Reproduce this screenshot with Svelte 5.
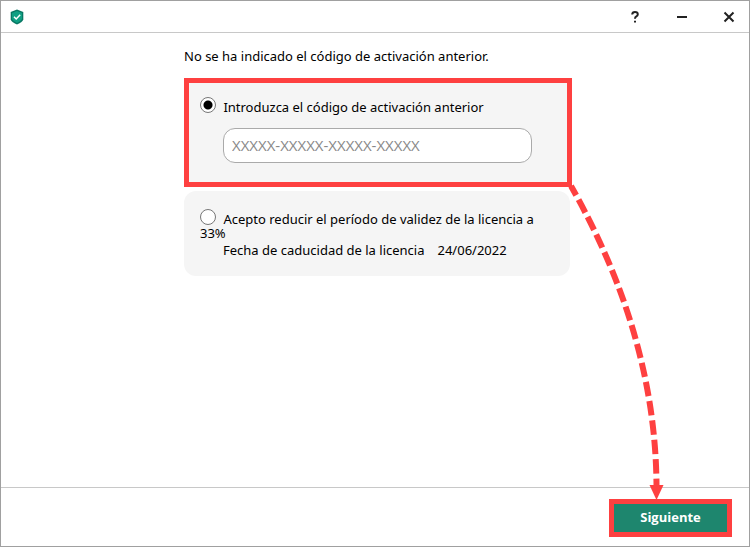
<script lang="ts">
    import { onMount } from 'svelte';

    let page: HTMLElement;
    let source: HTMLElement;
    let target: HTMLElement;

    let choice = $state('code');
    let code = $state('');
    let curve = $state('');
    let head = $state('');

    // Curve from the corner of the marked card down to the marked button
    function connect() {
        const origin = page.getBoundingClientRect();
        const from = source.getBoundingClientRect();
        const to = target.getBoundingClientRect();

        const x1 = from.right - origin.left - 2;
        const y1 = from.bottom - origin.top - 2;
        const x2 = to.left + to.width / 2 - origin.left - 15;
        const y2 = to.top - origin.top;
        const base = y2 - 15;

        curve = `M${x1} ${y1}Q${x2 - 1} ${y1 + (base - y1) / 2} ${x2} ${base}`;
        head = `M${x2 - 7} ${base}h14l-7 15z`;
    }

    onMount(connect);
</script>

<svelte:window onresize={connect} />

<div class="window" bind:this={page}>
    <header>
        <svg class="logo" viewBox="0 0 14 16" aria-hidden="true">
            <path d="M7 .5 13.3 3v7.2Q12.8 13 7 15.6 1.2 13 .7 10.2V3z" fill="#087763" />
            <path d="M7 2 12 4v6Q11 12.4 7 14 3 12.4 2 10V4z" fill="#109f83" />
            <path d="M4 7.8 6.2 10 10.2 5.8" fill="none" stroke="#fff" stroke-width="1.5" />
        </svg>
        <nav>
            <button type="button" aria-label="Ayuda">
                <svg viewBox="0 0 12 12">
                    <path d="M3.2 3.5Q3.3 1 6 1T8.8 3.3Q8.8 4.6 7.4 5.4 6 6.2 6 7.7" />
                    <path d="M6 9.8v1.8" />
                </svg>
            </button>
            <button type="button" aria-label="Minimizar">
                <svg viewBox="0 0 12 12"><path d="M1 6h10" /></svg>
            </button>
            <button type="button" aria-label="Cerrar">
                <svg viewBox="0 0 12 12"><path d="m1.5 1.5 9 9m0-9-9 9" /></svg>
            </button>
        </nav>
    </header>

    <main>
        <p class="intro">No se ha indicado el código de activación anterior.</p>

        <section class="card first">
            <label class="option">
                <input type="radio" name="choice" value="code" bind:group={choice} />
                Introduzca el código de activación anterior
            </label>
            <input
                class="code"
                type="text"
                aria-label="Código de activación anterior"
                placeholder="XXXXX-XXXXX-XXXXX-XXXXX"
                autocomplete="off"
                bind:value={code}
            />
            <div class="marker" bind:this={source}></div>
        </section>

        <section class="card">
            <label class="option">
                <input type="radio" name="choice" value="reduce" bind:group={choice} />
                Acepto reducir el período de validez de la licencia a 33%
            </label>
            <p class="expiry">
                <span>Fecha de caducidad de la licencia</span>
                <time datetime="2022-06-24">24/06/2022</time>
            </p>
        </section>
    </main>

    <footer>
        <div class="action" bind:this={target}>
            <button type="button">Siguiente</button>
        </div>
    </footer>

    <svg class="arrow" aria-hidden="true">
        <path class="curve" d={curve} />
        <path class="head" d={head} />
    </svg>
</div>

<style>
    :global(body) {
        background: #fff;
    }

    .window {
        border: 1px solid #a0a0a0;
        box-sizing: border-box;
        color: #000;
        display: flex;
        flex-direction: column;
        font-family: 'Noto Sans', sans-serif;
        font-size: 13px;
        line-height: 16px;
        min-height: 100vh;
        position: relative;
    }

    header {
        align-items: center;
        border-bottom: 1px solid #c8c8c8;
        display: flex;
        height: 31px;
        justify-content: space-between;
        padding-left: 9px;
    }

    .logo {
        height: 16px;
        width: 14px;
    }

    nav {
        display: flex;
        gap: 7px;
    }

    nav button {
        align-items: center;
        background: transparent;
        border: 0;
        cursor: pointer;
        display: flex;
        height: 31px;
        justify-content: center;
        padding: 0;
        width: 40px;
    }

    nav svg {
        fill: none;
        height: 12px;
        stroke: #222;
        stroke-width: 2;
        width: 12px;
    }

    main {
        box-sizing: border-box;
        flex: 1;
        margin: 0 auto;
        max-width: 390px;
        padding: 15px 0 16px 4px;
        width: 100%;
    }

    p {
        margin: 0;
    }

    .intro {
        margin-bottom: 14px;
    }

    .card {
        background: #f5f5f5;
        border-radius: 12px;
        box-sizing: border-box;
        padding: 18px 16px;
        position: relative;
    }

    .first {
        margin-bottom: 6px;
        padding: 19px 16px 22px;
    }

    .option {
        display: block;
        line-height: 14px;
    }

    input[type='radio'] {
        appearance: none;
        background: #fff;
        border: 1px solid #777;
        border-radius: 50%;
        height: 16px;
        margin: 0 4px 0 0;
        vertical-align: -1px;
        width: 16px;
    }

    input[type='radio']:checked {
        background: radial-gradient(circle, #000 4px, #fff 5px);
    }

    .code {
        background: #fff;
        border: 1px solid #aaa;
        border-radius: 12px;
        box-sizing: border-box;
        color: inherit;
        display: block;
        font-family: 'Open Sans', 'Noto Sans', sans-serif;
        font-size: 15px;
        height: 35px;
        margin: 14px 22px 0 23px;
        padding: 0 8px 2px;
        width: calc(100% - 45px);
    }

    .code::placeholder {
        color: #888;
        opacity: 1;
    }

    .marker {
        border: 5px solid #fe4040;
        inset: 0 -2px -2px 0;
        pointer-events: none;
        position: absolute;
    }

    .expiry {
        display: flex;
        gap: 13px;
        margin: 2px 0 0 23px;
    }

    footer {
        border-top: 1px solid #c8c8c8;
        display: flex;
        justify-content: flex-end;
        padding: 11px 17px 9px;
    }

    .action {
        border: 5px solid #fe4040;
    }

    .action button {
        background: #1e866e;
        border: 0;
        color: #fff;
        cursor: pointer;
        display: block;
        font-family: 'Open Sans', 'Noto Sans', sans-serif;
        font-size: 13px;
        font-weight: 700;
        height: 28px;
        padding: 0 0 2px;
        width: 113px;
    }

    .arrow {
        height: 100%;
        left: 0;
        pointer-events: none;
        position: absolute;
        top: 0;
        width: 100%;
    }

    .curve {
        fill: none;
        stroke: #fe4040;
        stroke-dasharray: 14.5 5;
        stroke-dashoffset: 4;
        stroke-width: 6;
    }

    .head {
        fill: #fe4040;
    }
</style>
